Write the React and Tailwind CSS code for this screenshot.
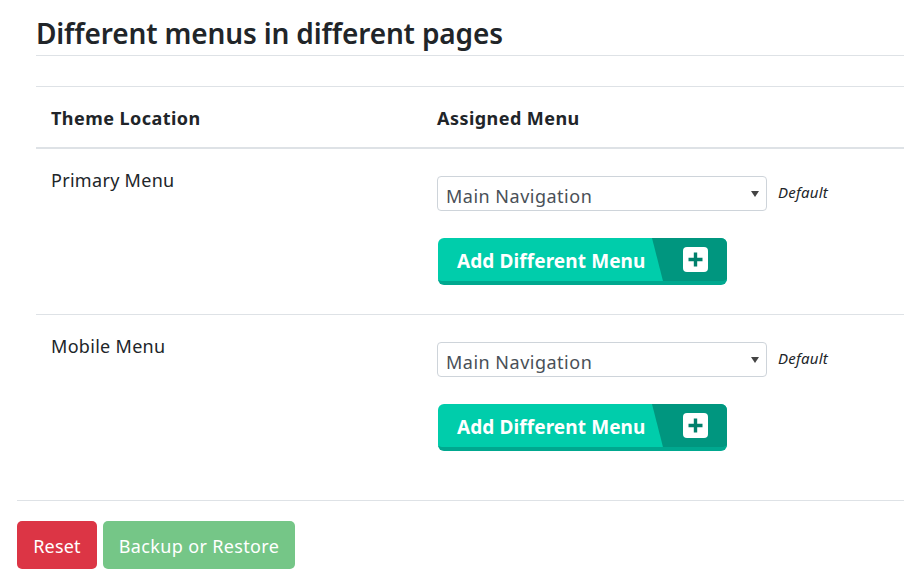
const font = { fontFamily: '"Noto Sans", sans-serif' };

function AddButton() {
  return (
    <button className="relative mt-[27px] ml-[1px] flex h-[47px] w-[289px] items-center overflow-hidden rounded-[6px] border-b-[4px] border-[#00a88f] bg-[#00cdab] pl-[19px] text-left">
      <span className="relative z-10 pt-[2px] text-[19px] leading-[26px] font-bold tracking-[0.1px] whitespace-nowrap text-white">Add Different Menu</span>
      <svg className="absolute top-0 right-0" width="75" height="47" viewBox="0 0 75 47">
        <polygon points="0,0 75,0 75,47 12,47" fill="#00967f" />
        <polygon points="11.5,43 34,43 22,47 12,47" fill="#007f6b" />
        <rect x="31" y="9" width="25" height="25" rx="4" fill="#fff" />
        <path d="M43.5 14.5v14M36.5 21.5h14" stroke="#00806c" strokeWidth="3.4" />
      </svg>
    </button>
  );
}

function Row({ label, last }) {
  return (
    <div className={`flex h-[166px] ${last ? '' : 'border-b border-[#dee2e6]'}`}>
      <div className="w-[401px] pt-[18px] pl-[15px] text-[18px] leading-[27px] tracking-[0.3px] text-[#212529]">{label}</div>
      <div className="pt-[27px]">
        <div className="flex items-center">
          <div className="flex h-[35px] w-[330px] items-center justify-between rounded-[4px] border border-[#ced4da] pr-[7px] pl-[8px] text-[18px] text-[#495057]">
            <span className="pt-[5px] leading-[27px] tracking-[0.5px]">Main Navigation</span>
            <svg width="8" height="6" viewBox="0 0 8 6"><polygon points="0,0 8,0 4,6" fill="#444" /></svg>
          </div>
          <span className="mb-[2px] ml-[11px] text-[15px] tracking-[0.25px] text-[#212529] italic">Default</span>
        </div>
        <AddButton />
      </div>
    </div>
  );
}

export default function App() {
  return (
    <div style={font} className="h-[583px] w-[904px] overflow-hidden bg-white">
      <div className="pl-[36px]">
        <h2 className="h-[56px] border-b border-[#dee2e6] pt-[12px] text-[28px] leading-[42px] font-semibold tracking-[-0.15px] text-[#212529]">
          Different menus in different pages
        </h2>
        <div className="mt-[30px] flex h-[63px] items-center border-t border-b-2 border-[#dee2e6] pt-[2px] text-[18px] font-bold tracking-[0.45px] text-[#212529]">
          <div className="w-[401px] pl-[15px]">Theme Location</div>
          <div>Assigned Menu</div>
        </div>
        <Row label="Primary Menu" />
        <Row label="Mobile Menu" last />
      </div>
      <div className="mt-[19px] ml-[17px] flex gap-[6px] border-t border-[#dee2e6] pt-[20px]">
        <button className="h-[48px] w-[80px] rounded-[5px] bg-[#dc3545] pt-[2px] text-[18px] tracking-[0.2px] text-white">Reset</button>
        <button className="h-[48px] w-[192px] rounded-[5px] bg-[#75c687] pt-[2px] text-[18px] tracking-[0.35px] text-white">Backup or Restore</button>
      </div>
    </div>
  );
}
